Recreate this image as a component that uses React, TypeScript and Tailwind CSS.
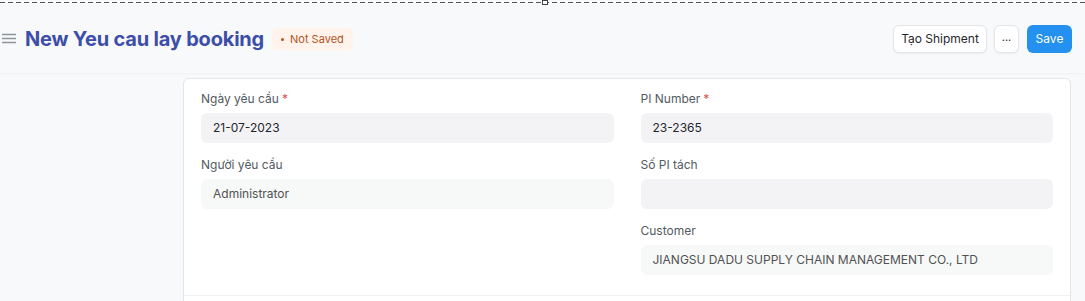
import React from 'react';

interface FieldProps {
  label: string;
  value?: string;
  required?: boolean;
  readOnly?: boolean;
}

function Field({ label, value, required, readOnly }: FieldProps) {
  return (
    <div className="mb-[14px]">
      <div className="h-[16px] mb-[6px] text-[12px] leading-[16px] text-[#525a62]">
        {label}
        {required && <span className="text-[#e24c4c] ml-[3px]">*</span>}
      </div>
      <div
        className={`h-[30px] rounded-[6px] px-[12px] flex items-center text-[12px] ${
          readOnly ? 'bg-[#f7f8f8] text-[#525252]' : 'bg-[#f3f3f5] text-[#1f272e]'
        }`}
      >
        {value}
      </div>
    </div>
  );
}

export default function App() {
  return (
    <div className="w-[1085px] h-[301px] overflow-hidden bg-[#f8f9fa] font-['Inter',sans-serif] relative">
      {/* dashed guide at the top */}
      <svg className="absolute top-0 left-0" width="1085" height="6">
        <line x1="0" y1="2.5" x2="1085" y2="2.5" stroke="#555" strokeWidth="1" strokeDasharray="5 3" />
        <rect x="542.5" y="0.5" width="5" height="4" fill="#fff" stroke="#444" strokeWidth="1" />
      </svg>

      {/* header */}
      <div className="h-[73px] pt-[5px] flex items-center pl-[2px] pr-[13px] shadow-[0_1px_2px_rgba(0,0,0,0.04)]">
        <svg width="14" height="12" viewBox="0 0 14 12" className="mr-[9px]">
          <path d="M0 1.5h14M0 5.5h14M0 9.5h14" stroke="#8d949a" strokeWidth="1.4" />
        </svg>
        <h1 className="text-[20px] font-bold text-[#3d4ea9] tracking-[-0.2px]">New Yeu cau lay booking</h1>
        <div className="ml-[8px] h-[22px] px-[9px] rounded-[6px] bg-[#fff3ec] flex items-center text-[11px] text-[#b4541e]">
          <span className="w-[3px] h-[3px] rounded-full bg-[#b4541e] mr-[6px]" />
          Not Saved
        </div>
        <div className="ml-auto flex items-center gap-[7px]">
          <button className="h-[28px] w-[94px] rounded-[6px] bg-white border border-[#e2e6e9] text-[12px] text-[#1f272e] shadow-[0_1px_2px_rgba(0,0,0,0.05)]">
            Tạo Shipment
          </button>
          <button className="h-[28px] w-[25px] rounded-[6px] bg-white border border-[#e2e6e9] text-[11px] text-[#1f272e] leading-none pb-[4px] shadow-[0_1px_2px_rgba(0,0,0,0.05)]">
            ...
          </button>
          <button className="h-[28px] w-[45px] ml-[1px] rounded-[6px] bg-[#2490ef] text-[12px] text-white">
            Save
          </button>
        </div>
      </div>

      {/* form card */}
      <div className="pl-[183px] pr-[14px] pt-[5px]">
        <div className="bg-white border border-[#e2e6e9] rounded-t-[6px]">
          <div className="px-[17px] pt-[12px] pb-[6px] grid grid-cols-2 gap-x-[27px] border-b border-[#eef0f2]">
            <div>
              <Field label="Ngày yêu cầu" value="21-07-2023" required />
              <Field label="Người yêu cầu" value="Administrator" readOnly />
            </div>
            <div>
              <Field label="PI Number" value="23-2365" required />
              <Field label="Số PI tách" />
              <Field label="Customer" value="JIANGSU DADU SUPPLY CHAIN MANAGEMENT CO., LTD" readOnly />
            </div>
          </div>
          <div className="h-[20px]" />
        </div>
      </div>
    </div>
  );
}
